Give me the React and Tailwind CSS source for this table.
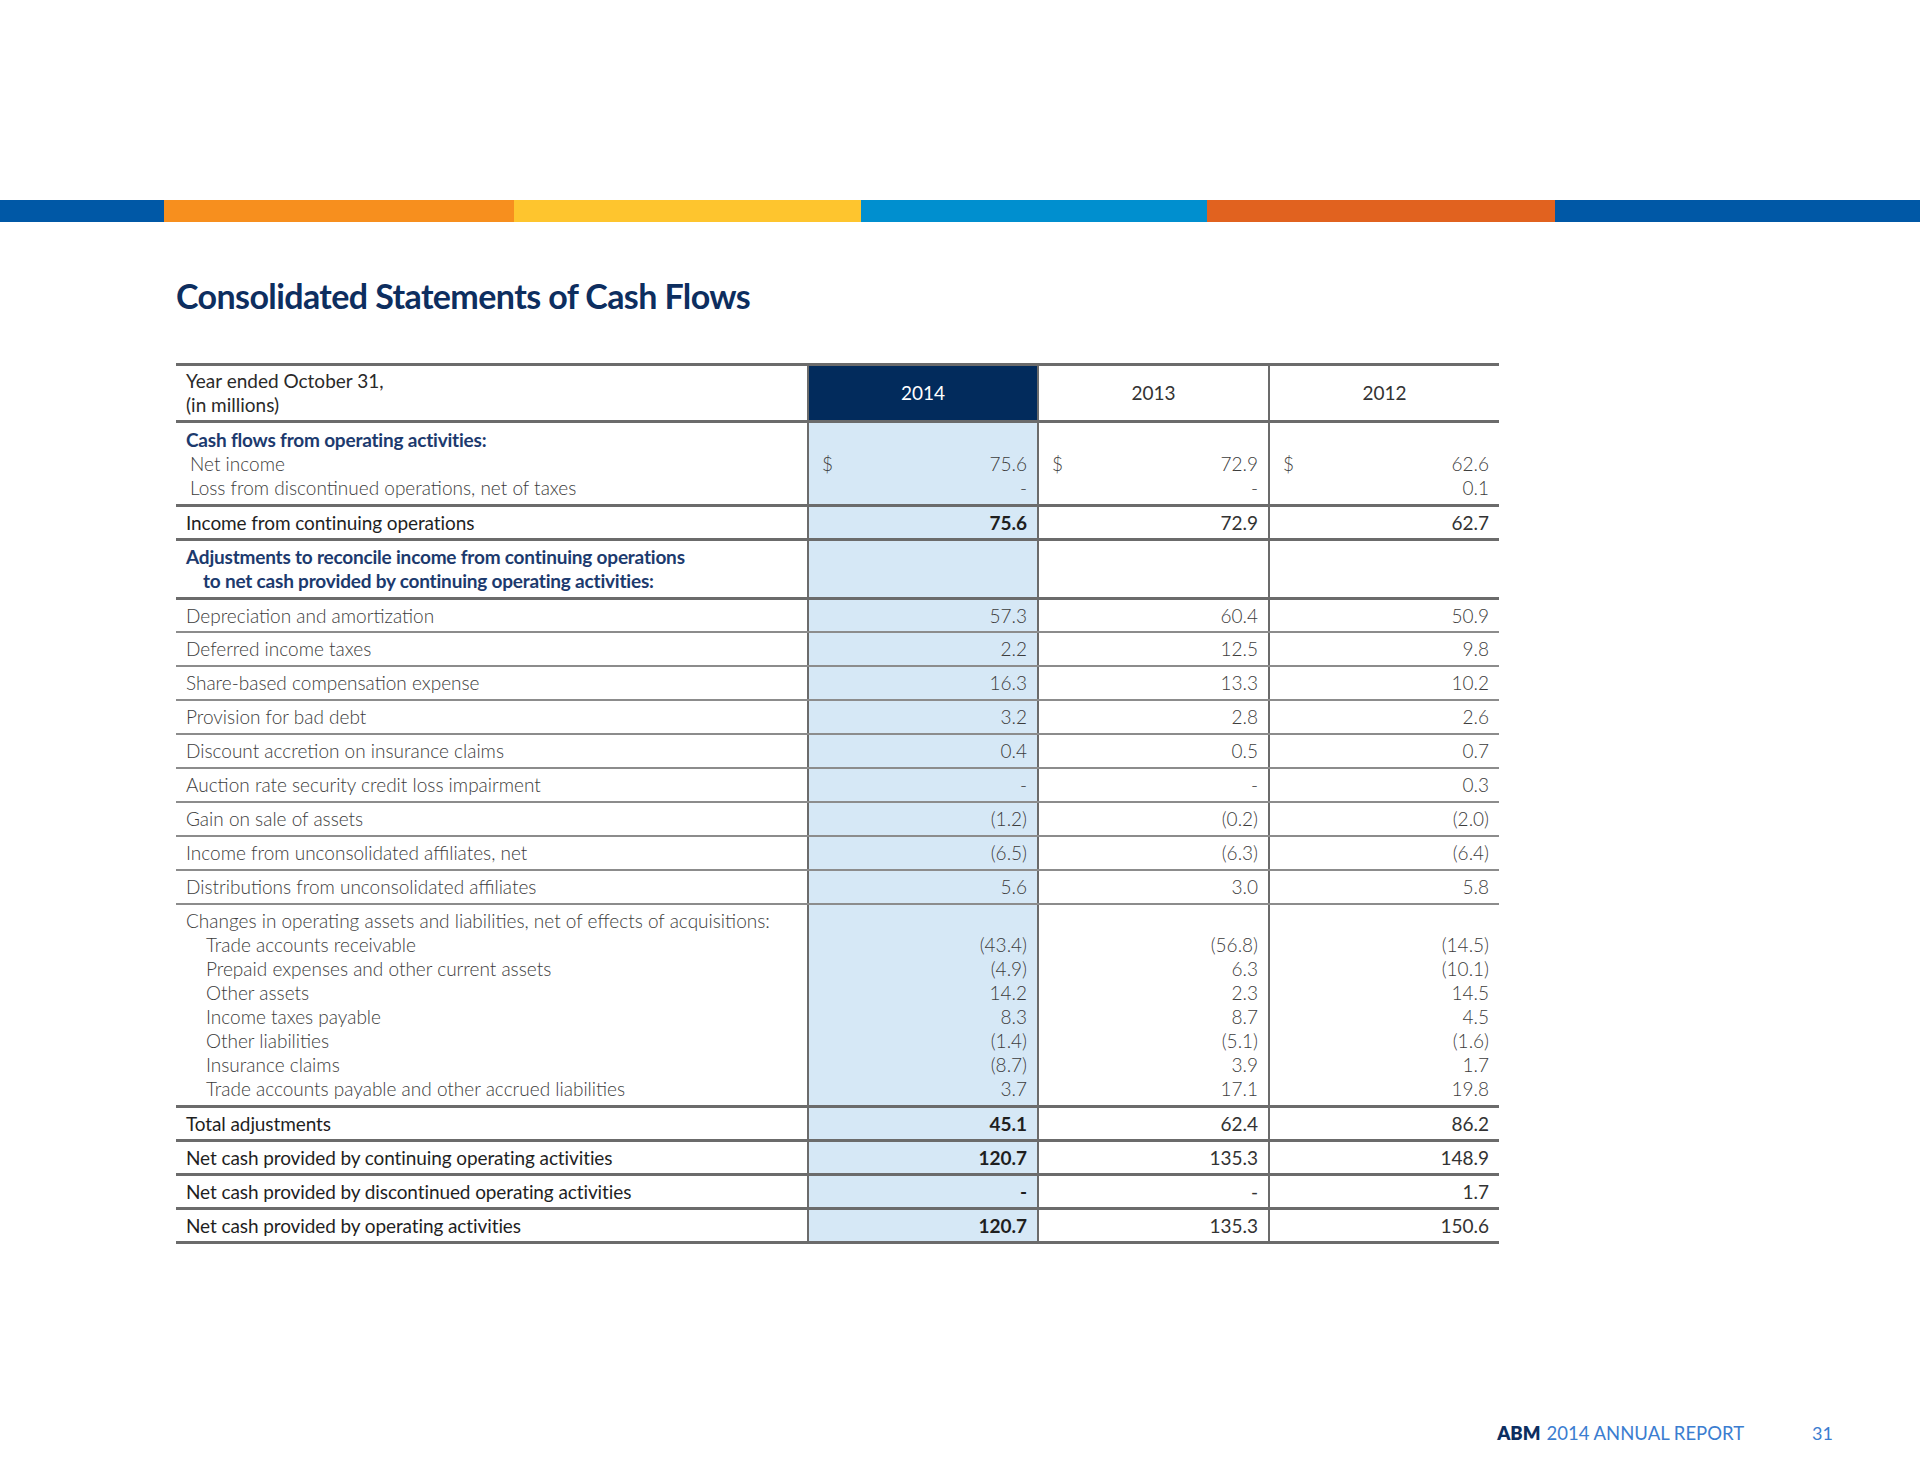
const GRID = "grid grid-cols-[631px_230px_231px_231px]";
const THICK = "border-t-[3px] border-[#6b6b6b]";
const THIN = "border-t-2 border-[#8c8c8c]";

function L({ children, className = "" }) {
  return <div className={"h-6 leading-6 whitespace-nowrap " + className}>{children}</div>;
}

function Row({ border, h, label, vals, bold }) {
  return (
    <div className={`${GRID} ${border} ${h}`}>
      <div className="flex flex-col justify-center pl-[10px]">{label}</div>
      {vals.map((lines, i) => (
        <div
          key={i}
          className={`flex flex-col justify-center border-l-2 border-[#6b6b6b] pl-[13px] pr-[10px] ${i === 0 ? "bg-[#d6e8f6]" : ""}`}
        >
          {lines.map((ln, j) => (
            <div
              key={j}
              className={`flex justify-between h-6 leading-6 ${bold ? (i === 0 ? "font-bold text-[#1f1f1f]" : "font-normal text-[#333]") : "font-light text-[#3c3c3c]"}`}
            >
              <span>{ln.d ? "$" : ""}</span>
              <span>{ln.v}</span>
            </div>
          ))}
        </div>
      ))}
    </div>
  );
}

const reg = "font-light text-[#3c3c3c]";
const boldL = "font-normal text-[#1f1f1f] tracking-[-0.1px]";
const navy = "font-bold text-[#1c3a6e] tracking-[-0.2px]";

const simple = [
  ["Depreciation and amortization", "57.3", "60.4", "50.9"],
  ["Deferred income taxes", "2.2", "12.5", "9.8"],
  ["Share-based compensation expense", "16.3", "13.3", "10.2"],
  ["Provision for bad debt", "3.2", "2.8", "2.6"],
  ["Discount accretion on insurance claims", "0.4", "0.5", "0.7"],
  ["Auction rate security credit loss impairment", "-", "-", "0.3"],
  ["Gain on sale of assets", "(1.2)", "(0.2)", "(2.0)"],
  ["Income from unconsolidated affiliates, net", "(6.5)", "(6.3)", "(6.4)"],
  ["Distributions from unconsolidated affiliates", "5.6", "3.0", "5.8"],
];

const changes = [
  ["Trade accounts receivable", "(43.4)", "(56.8)", "(14.5)"],
  ["Prepaid expenses and other current assets", "(4.9)", "6.3", "(10.1)"],
  ["Other assets", "14.2", "2.3", "14.5"],
  ["Income taxes payable", "8.3", "8.7", "4.5"],
  ["Other liabilities", "(1.4)", "(5.1)", "(1.6)"],
  ["Insurance claims", "(8.7)", "3.9", "1.7"],
  ["Trade accounts payable and other accrued liabilities", "3.7", "17.1", "19.8"],
];

const totals = [
  ["Total adjustments", "45.1", "62.4", "86.2"],
  ["Net cash provided by continuing operating activities", "120.7", "135.3", "148.9"],
  ["Net cash provided by discontinued operating activities", "-", "-", "1.7"],
  ["Net cash provided by operating activities", "120.7", "135.3", "150.6"],
];

export default function App() {
  return (
    <div className="w-[1920px] h-[1484px] bg-white flex flex-col font-['Lato',sans-serif] text-[19px]">
      <div className="h-[200px]" />
      <div className="flex h-[22px]">
        <div className="w-[164px] bg-[#0058a6]" />
        <div className="w-[350px] bg-[#f78f1e]" />
        <div className="w-[347px] bg-[#fec52e]" />
        <div className="w-[346px] bg-[#008fcf]" />
        <div className="w-[348px] bg-[#e1621f]" />
        <div className="flex-1 bg-[#0058a6]" />
      </div>

      <h1 className="mt-[54px] pl-[176px] h-[40px] leading-[40px] text-[34px] tracking-[-0.6px] font-bold text-[#0d2e5f]">
        Consolidated Statements of Cash Flows
      </h1>

      <div className="mt-[47px] ml-[176px] w-[1323px] border-b-[3px] border-[#6b6b6b]">
        {/* header */}
        <div className={`${GRID} ${THICK} h-[57px]`}>
          <div className="flex flex-col justify-center pl-[10px] font-normal text-[#2a2a2a]">
            <L>Year ended October 31,</L>
            <L>(in millions)</L>
          </div>
          <div className="flex items-center justify-center border-l-2 border-[#6b6b6b] bg-[#022b5c] text-white">2014</div>
          <div className="flex items-center justify-center border-l-2 border-[#6b6b6b] text-[#333]">2013</div>
          <div className="flex items-center justify-center border-l-2 border-[#6b6b6b] text-[#333]">2012</div>
        </div>

        <Row
          border={THICK}
          h="h-[84px]"
          label={
            <>
              <L className={navy}>Cash flows from operating activities:</L>
              <L className={`${reg} pl-[4px]`}>Net income</L>
              <L className={`${reg} pl-[4px]`}>Loss from discontinued operations, net of taxes</L>
            </>
          }
          vals={[
            [{ v: "" }, { v: "75.6", d: true }, { v: "-" }],
            [{ v: "" }, { v: "72.9", d: true }, { v: "-" }],
            [{ v: "" }, { v: "62.6", d: true }, { v: "0.1" }],
          ]}
        />

        <Row
          border={THICK}
          h="h-[34px]"
          bold
          label={<L className={boldL}>Income from continuing operations</L>}
          vals={[[{ v: "75.6" }], [{ v: "72.9" }], [{ v: "62.7" }]]}
        />

        <Row
          border={THICK}
          h="h-[59px]"
          label={
            <>
              <L className={navy}>Adjustments to reconcile income from continuing operations</L>
              <L className={`${navy} pl-[17px]`}>to net cash provided by continuing operating activities:</L>
            </>
          }
          vals={[[], [], []]}
        />

        {simple.map((r, i) => (
          <Row
            key={i}
            border={i === 0 ? THICK : THIN}
            h="h-[34px]"
            label={<L className={reg}>{r[0]}</L>}
            vals={[[{ v: r[1] }], [{ v: r[2] }], [{ v: r[3] }]]}
          />
        ))}

        <Row
          border={THIN}
          h="h-[202px]"
          label={
            <>
              <L className={reg}>Changes in operating assets and liabilities, net of effects of acquisitions:</L>
              {changes.map((c, i) => (
                <L key={i} className={`${reg} pl-[20px]`}>{c[0]}</L>
              ))}
            </>
          }
          vals={[1, 2, 3].map((k) => [{ v: "" }, ...changes.map((c) => ({ v: c[k] }))])}
        />

        {totals.map((r, i) => (
          <Row
            key={i}
            border={THICK}
            h="h-[34px]"
            bold
            label={<L className={boldL}>{r[0]}</L>}
            vals={[[{ v: r[1] }], [{ v: r[2] }], [{ v: r[3] }]]}
          />
        ))}
      </div>

      <div className="mt-auto mb-[39px] flex justify-end items-center pr-[87px] h-6 leading-6 text-[18.5px]">
        <span className="font-extrabold text-[#0d2e5f]">ABM</span>
        <span className="ml-[6px] font-normal text-[#3b7dd0]">2014 ANNUAL REPORT</span>
        <span className="ml-[68px] font-normal text-[#3b7dd0] text-[18px]">31</span>
      </div>
    </div>
  );
}
